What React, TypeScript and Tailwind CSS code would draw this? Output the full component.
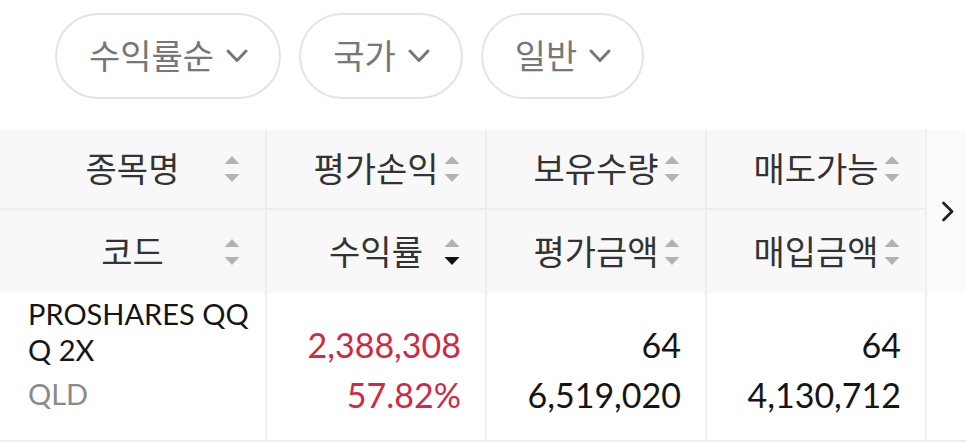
import React from 'react'

const font = { fontFamily: 'Lato, "Noto Sans CJK KR", sans-serif' }

const ChipChevron = () => (
  <svg width="22" height="14" viewBox="0 0 22 14" fill="none">
    <polyline points="2,2 11,11.5 20,2" stroke="#777" strokeWidth="3" strokeLinecap="round" strokeLinejoin="round" />
  </svg>
)

const SortIcon = ({ active }: { active?: 'up' | 'down' }) => (
  <svg width="16" height="27" viewBox="0 0 16 27" className="absolute right-[25px] top-1/2 -translate-y-1/2">
    <path d="M8 0.5 L15.5 8.5 L0.5 8.5 Z" fill={active === 'up' ? '#111' : '#b3b3b3'} />
    <path d="M0.5 18.5 L15.5 18.5 L8 26.5 Z" fill={active === 'down' ? '#111' : '#b3b3b3'} />
  </svg>
)

const Chip = ({ label }: { label: string }) => (
  <button className="flex h-[86px] items-center gap-[12px] rounded-full border-2 border-[#e4e4e4] bg-white pl-[32px] pr-[31px] text-[34px] text-[#777]">
    <span className="leading-none">{label}</span>
    <ChipChevron />
  </button>
)

const HeaderCell = ({ label, active, last }: { label: string; active?: 'up' | 'down'; last?: boolean }) => (
  <div className={`relative flex items-center justify-center border-[#eeeeee] border-r-2 ${last ? '' : 'border-b-2'} bg-[#f8f8f8] text-[34px] text-[#333]`}>
    <span className="leading-none">{label}</span>
    <SortIcon active={active} />
  </div>
)

const NumCell = ({ top, bottom, red }: { top: string; bottom: string; red?: boolean }) => (
  <div className={`flex flex-col items-end justify-center border-r-2 border-b-2 border-[#eeeeee] pr-[24px] pt-[7px] text-[34px] leading-[50px] ${red ? 'text-[#cf2a43]' : 'text-[#151515]'}`}>
    <span>{top}</span>
    <span>{bottom}</span>
  </div>
)

export default function App() {
  return (
    <div className="h-[444px] w-[966px] overflow-hidden bg-white" style={font}>
      <div className="flex gap-[18px] pl-[55px] pt-[13px]">
        <Chip label="수익률순" />
        <Chip label="국가" />
        <Chip label="일반" />
      </div>

      <div className="mt-[31px] grid grid-cols-[267px_220px_220px_220px_1fr] grid-rows-[80px_83px_149px]">
        <HeaderCell label="종목명" />
        <HeaderCell label="평가손익" />
        <HeaderCell label="보유수량" />
        <HeaderCell label="매도가능" />
        <div className="row-span-2 flex items-center justify-center bg-[#fbfbfb]">
          <svg width="14" height="21" viewBox="0 0 14 21" fill="none" className="ml-[2px]">
            <polyline points="2.5,2 11,10.5 2.5,19" stroke="#222" strokeWidth="2.8" strokeLinecap="round" strokeLinejoin="round" />
          </svg>
        </div>
        <HeaderCell label="코드" last />
        <HeaderCell label="수익률" active="down" last />
        <HeaderCell label="평가금액" last />
        <HeaderCell label="매입금액" last />

        <div className="border-r-2 border-b-2 border-[#eeeeee] pl-[28px] pr-[10px] pt-[3px]">
          <div className="break-all text-[29px] leading-[36px] text-[#151515]">PROSHARES QQQ 2X</div>
          <div className="mt-[8px] text-[29px] leading-[36px] text-[#8a8a8a]">QLD</div>
        </div>
        <NumCell top="2,388,308" bottom="57.82%" red />
        <NumCell top="64" bottom="6,519,020" />
        <NumCell top="64" bottom="4,130,712" />
        <div className="border-b-2 border-[#eeeeee]" />
      </div>
    </div>
  )
}
